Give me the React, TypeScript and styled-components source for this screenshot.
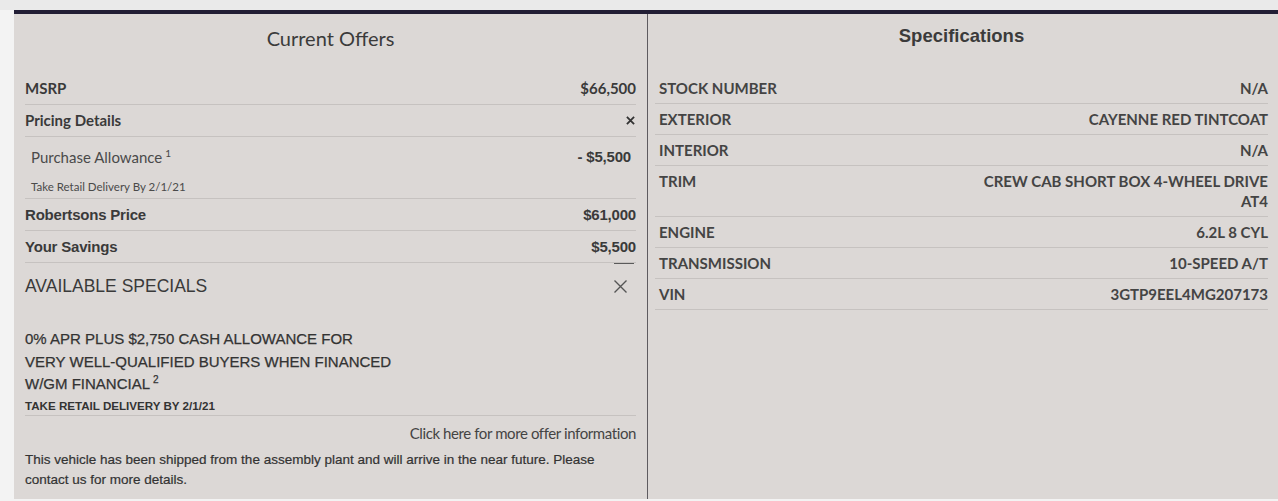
import React from 'react'
import styled, { createGlobalStyle } from 'styled-components'

const GlobalStyle = createGlobalStyle`
  html, body {
    margin: 0;
    padding: 0;
    background: #f3f3f3;
  }
`

const lato = `Lato, 'Open Sans', sans-serif`
const arial = `'Liberation Sans', Arial, sans-serif`
const ink = '#3a3a3a'
const rule = '#c6c2c0'

const Page = styled.div`
  padding: 10px 0 2px 14px;
  background: linear-gradient(180deg, #eaeaea 0, #eaeaea 10px, #f3f3f3 10px);
`

const Panel = styled.div`
  display: grid;
  grid-template-columns: 633px 1px 1fr;
  border-top: 4px solid #221e35;
  background: #dcd8d6;
  height: 489px;
  box-sizing: border-box;
`

const Divider = styled.div`
  background: #5e5b60;
`

const Column = styled.section<{ side: 'left' | 'right' }>`
  padding: ${({ side }) => (side === 'left' ? '0 11px' : '0 10px 0 7px')};
  color: ${ink};
`

const Heading = styled.h2<{ serif?: boolean }>`
  margin: 0;
  text-align: center;
  font-family: ${({ serif }) => (serif ? lato : arial)};
  font-weight: ${({ serif }) => (serif ? 400 : 700)};
  font-size: ${({ serif }) => (serif ? '20px' : '18.5px')};
  line-height: 24px;
  padding: ${({ serif }) => (serif ? '12px 0 23px' : '10px 0 25px')};
  color: #3b3b3b;
`

const Row = styled.div<{ font?: 'lato' | 'arial' }>`
  display: flex;
  justify-content: space-between;
  align-items: center;
  border-bottom: 1px solid ${rule};
  padding: 5px 0;
  line-height: 21px;
  font-size: 15px;
  font-weight: 700;
  font-family: ${({ font }) => (font === 'arial' ? arial : lato)};
  letter-spacing: ${({ font }) => (font === 'arial' ? '-0.2px' : '0')};
`

const Allowance = styled.div`
  border-bottom: 1px solid ${rule};
  padding: 8px 5px 3px 6px;
`

const AllowanceLine = styled.div`
  display: flex;
  justify-content: space-between;
  line-height: 24px;
  font-family: ${lato};
  font-size: 15px;
  color: #4a4a4a;
`

const AllowanceValue = styled.span`
  font-family: ${arial};
  font-weight: 700;
  letter-spacing: -0.2px;
  color: ${ink};
`

const Sup = styled.sup`
  font-size: 10px;
  vertical-align: 0;
  position: relative;
  top: -6px;
  margin-left: 3px;
`

const SmallNote = styled.div`
  padding-top: 8px;
  font-family: ${lato};
  font-size: 11.5px;
  line-height: 16px;
  color: #4a4a4a;
`

const CollapseMark = styled.div`
  width: 20px;
  height: 1px;
  margin: 0 2px 0 auto;
  background: #5a5a5a;
`

const SpecialsHead = styled.div`
  display: flex;
  justify-content: space-between;
  align-items: center;
  padding: 10px 8px 0 0;
  margin-bottom: 30px;
  font-family: ${arial};
  font-size: 17.5px;
  line-height: 24px;
`

const OfferTitle = styled.div`
  font-family: ${arial};
  font-size: 15px;
  line-height: 22.5px;
  color: #333;
  -webkit-text-stroke: 0.25px #333;
`

const OfferDelivery = styled.div`
  font-family: ${arial};
  font-weight: 700;
  font-size: 11.6px;
  line-height: 16px;
  padding-bottom: 1px;
  border-bottom: 1px solid ${rule};
  color: #333;
`

const MoreLink = styled.a`
  display: block;
  text-align: right;
  padding-top: 7px;
  font-family: ${lato};
  font-size: 15px;
  letter-spacing: -0.4px;
  line-height: 20px;
  color: #444;
  text-decoration: none;
`

const Notice = styled.p`
  margin: 7px 0 0;
  padding-right: 40px;
  font-family: ${arial};
  font-size: 13.5px;
  line-height: 20px;
  color: #333;
  -webkit-text-stroke: 0.2px #333;
`

const SpecRow = styled.div`
  display: flex;
  justify-content: space-between;
  align-items: flex-start;
  border-bottom: 1px solid ${rule};
  padding: 5px 0 5px 4px;
  line-height: 20px;
  font-family: ${lato};
  font-weight: 700;
  font-size: 15px;
  color: #444;
`

const SpecValue = styled.span`
  text-align: right;
  max-width: 300px;
`

const CloseIcon = ({ size, weight, color }: { size: number; weight: number; color: string }) => (
  <svg width={size} height={size} viewBox="0 0 10 10" style={{ display: 'block' }}>
    <path d="M1 1 L9 9 M9 1 L1 9" stroke={color} strokeWidth={weight} fill="none" />
  </svg>
)

const specs: [string, string][] = [
  ['STOCK NUMBER', 'N/A'],
  ['EXTERIOR', 'CAYENNE RED TINTCOAT'],
  ['INTERIOR', 'N/A'],
  ['TRIM', 'CREW CAB SHORT BOX 4-WHEEL DRIVE AT4'],
  ['ENGINE', '6.2L 8 CYL'],
  ['TRANSMISSION', '10-SPEED A/T'],
  ['VIN', '3GTP9EEL4MG207173'],
]

export default function App() {
  return (
    <>
      <GlobalStyle />
      <Page>
        <Panel>
          <Column side="left">
            <Heading serif>Current Offers</Heading>
            <Row>
              <span>MSRP</span>
              <span>$66,500</span>
            </Row>
            <Row>
              <span>Pricing Details</span>
              <span style={{ marginRight: 1 }}>
                <CloseIcon size={9} weight={2} color="#333" />
              </span>
            </Row>
            <Allowance>
              <AllowanceLine>
                <span>
                  Purchase Allowance<Sup>1</Sup>
                </span>
                <AllowanceValue>- $5,500</AllowanceValue>
              </AllowanceLine>
              <SmallNote>Take Retail Delivery By 2/1/21</SmallNote>
            </Allowance>
            <Row font="arial">
              <span>Robertsons Price</span>
              <span>$61,000</span>
            </Row>
            <Row font="arial">
              <span>Your Savings</span>
              <span>$5,500</span>
            </Row>
            <CollapseMark />
            <SpecialsHead>
              <span>AVAILABLE SPECIALS</span>
              <CloseIcon size={15} weight={0.9} color="#555" />
            </SpecialsHead>
            <OfferTitle>
              0% APR PLUS $2,750 CASH ALLOWANCE FOR
              <br />
              VERY WELL-QUALIFIED BUYERS WHEN FINANCED
              <br />
              W/GM FINANCIAL<Sup>2</Sup>
            </OfferTitle>
            <OfferDelivery>TAKE RETAIL DELIVERY BY 2/1/21</OfferDelivery>
            <MoreLink href="#">Click here for more offer information</MoreLink>
            <Notice>
              This vehicle has been shipped from the assembly plant and will arrive in the near future. Please
              contact us for more details.
            </Notice>
          </Column>
          <Divider />
          <Column side="right">
            <Heading>Specifications</Heading>
            {specs.map(([label, value]) => (
              <SpecRow key={label}>
                <span>{label}</span>
                <SpecValue>{value}</SpecValue>
              </SpecRow>
            ))}
          </Column>
        </Panel>
      </Page>
    </>
  )
}
